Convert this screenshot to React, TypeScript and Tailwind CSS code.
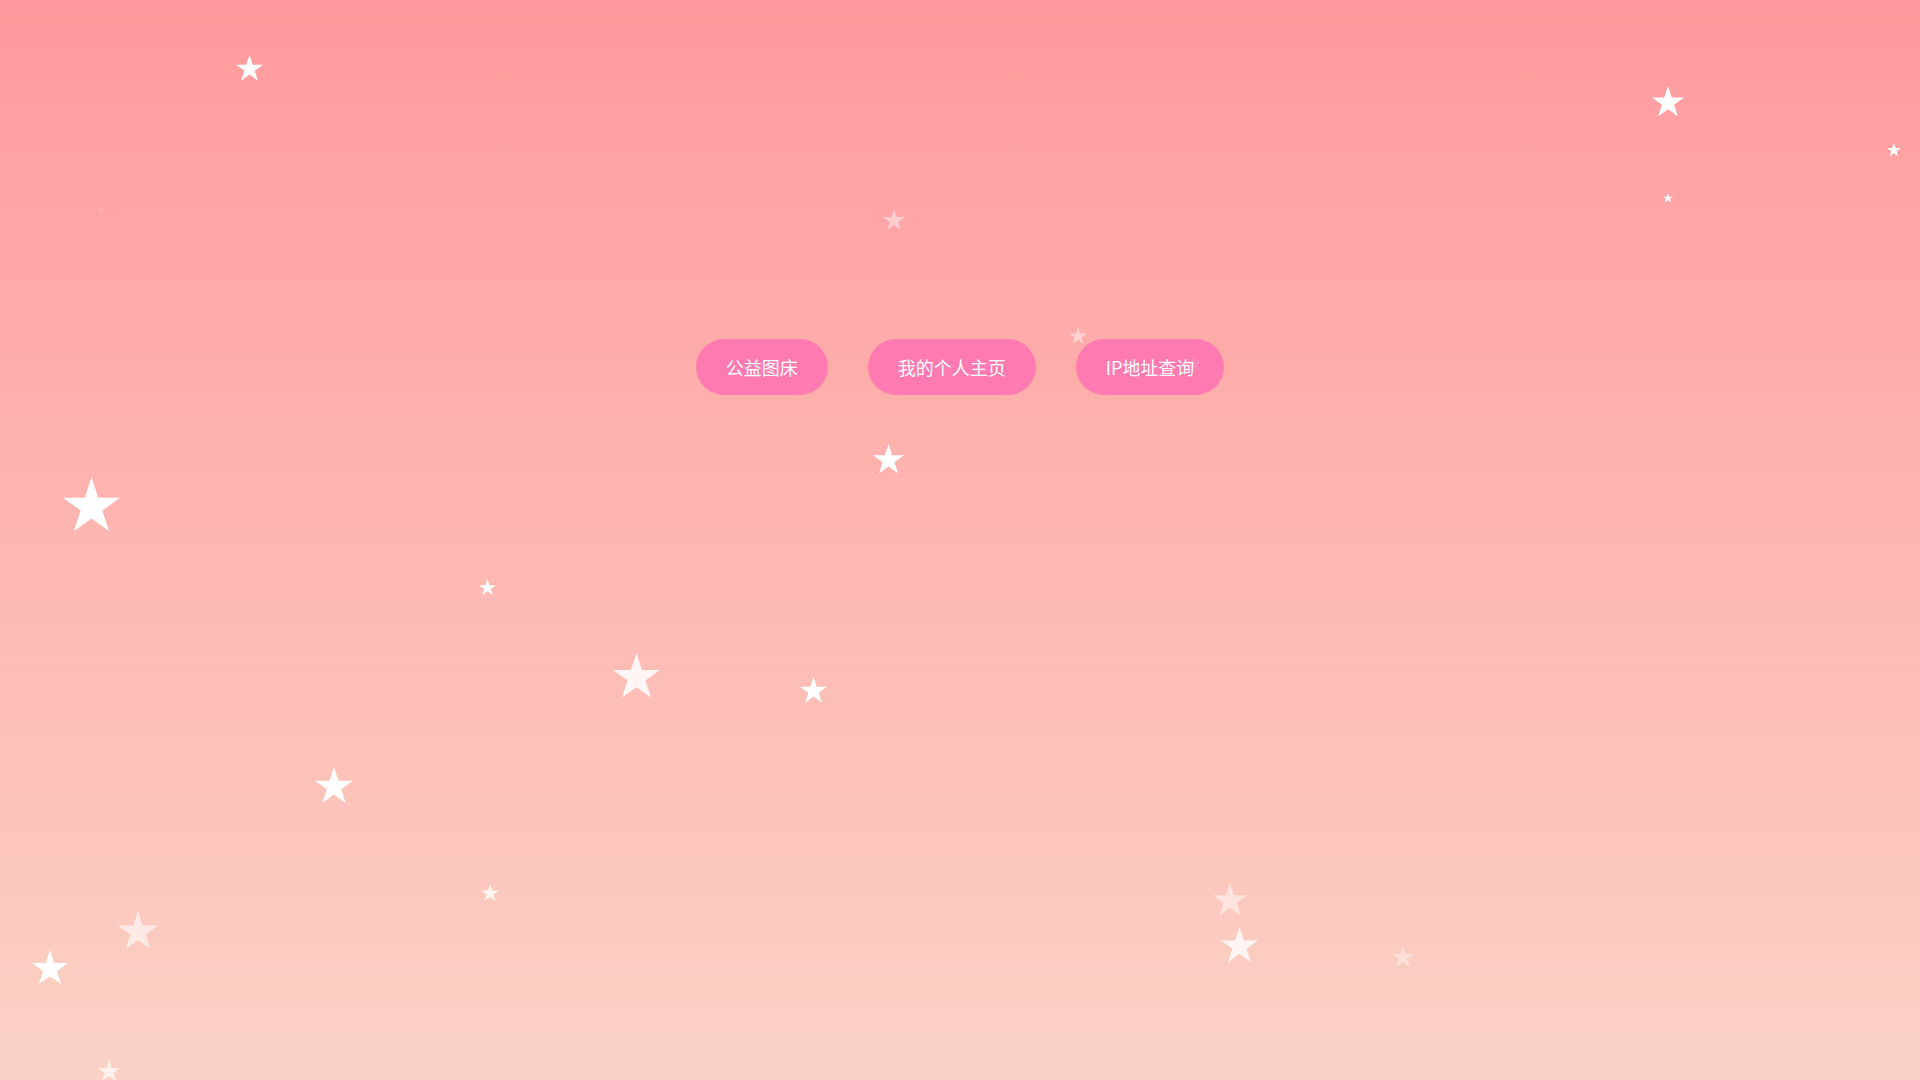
import React from 'react';

type Star = { x: number; y: number; w: number; o: number; blur?: boolean };

// centre x/y and width across the arms, in page pixels
const stars: Star[] = [
  { x: 249, y: 68, w: 27, o: 1, blur: true },
  { x: 1668, y: 101, w: 32, o: 1 },
  { x: 1894, y: 150, w: 14, o: 1 },
  { x: 1668, y: 198, w: 10, o: 1 },
  { x: 101, y: 209, w: 8, o: 0.12, blur: true },
  { x: 894, y: 219, w: 22, o: 0.45, blur: true },
  { x: 1078, y: 336, w: 18, o: 0.45, blur: true },
  { x: 1194, y: 363, w: 18, o: 0.12, blur: true },
  { x: 888, y: 459, w: 31, o: 1 },
  { x: 91, y: 504, w: 57, o: 1 },
  { x: 487, y: 587, w: 17, o: 1 },
  { x: 636, y: 675, w: 47, o: 0.85, blur: true },
  { x: 813, y: 690, w: 27, o: 1 },
  { x: 334, y: 785, w: 38, o: 1 },
  { x: 490, y: 893, w: 18, o: 0.8 },
  { x: 1230, y: 899, w: 34, o: 0.5, blur: true },
  { x: 138, y: 930, w: 40, o: 0.6, blur: true },
  { x: 1239, y: 945, w: 37, o: 0.8, blur: true },
  { x: 1403, y: 956, w: 22, o: 0.4, blur: true },
  { x: 50, y: 967, w: 36, o: 1 },
  { x: 109, y: 1070, w: 22, o: 0.7, blur: true },
];

const links = ['公益图床', '我的个人主页', 'IP地址查询'];

function StarShape({ s }: { s: Star }) {
  const h = s.w * 0.951;
  return (
    <svg
      viewBox="2.45 0 95.1 90.45"
      className={s.blur ? 'absolute pointer-events-none blur-[0.6px]' : 'absolute pointer-events-none'}
      style={{ left: s.x - s.w / 2, top: s.y - h / 2, width: s.w, height: h, opacity: s.o }}
    >
      <polygon
        fill="#ffffff"
        points="50,0 61.23,34.55 97.55,34.55 68.16,55.9 79.39,90.45 50,69.1 20.61,90.45 31.84,55.9 2.45,34.55 38.77,34.55"
      />
    </svg>
  );
}

export default function App() {
  return (
    <div className="relative w-full h-[1080px] overflow-hidden bg-gradient-to-b from-[#ff999d] to-[#fad2c5] font-['Noto_Sans_CJK_SC','Noto_Sans',sans-serif]">
      <div className="flex justify-center gap-[40px] pt-[339px]">
        {links.map(label => (
          <a
            key={label}
            href="#"
            className="h-[56px] px-[30px] flex items-center rounded-full bg-[#ff7ab0] text-white text-[18px] font-normal leading-none"
          >
            {label}
          </a>
        ))}
      </div>
      {stars.map((s, i) => (
        <StarShape key={i} s={s} />
      ))}
    </div>
  );
}
